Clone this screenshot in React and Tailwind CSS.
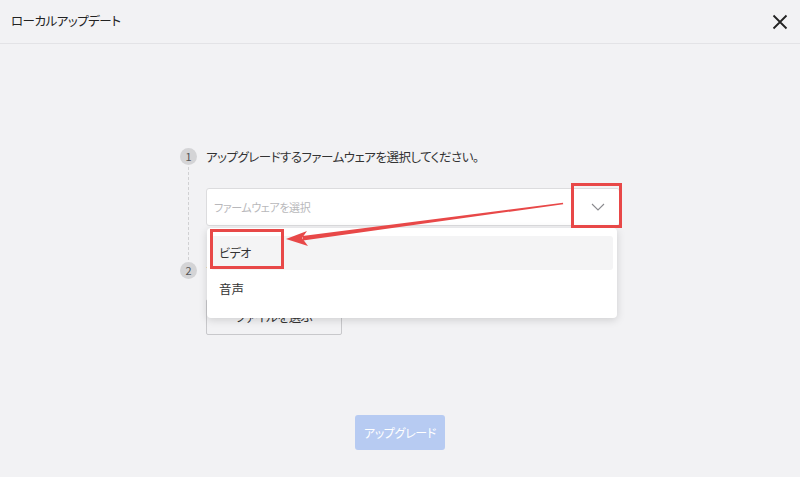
import React from 'react';

const font = { fontFamily: '"Noto Sans CJK JP", "Noto Sans", sans-serif', fontFeatureSettings: '"palt"' };

function StepDot({ n }) {
  return (
    <div className="w-[17px] h-[17px] rounded-full bg-[#d4d4d6] text-[#555] text-[11px] leading-[17px] text-center">
      {n}
    </div>
  );
}

export default function App() {
  return (
    <div className="w-[800px] h-[477px] bg-[#f2f2f4] relative overflow-hidden" style={font}>
      {/* header */}
      <div className="h-[44px] flex items-center justify-between pl-[11px] pr-[12px] border-b border-[#e3e3e6]">
        <span className="text-[12.5px] tracking-[-0.5px] text-[#222]">ローカルアップデート</span>
        <svg width="16" height="16" viewBox="0 0 16 16" className="text-[#222]">
          <path d="M1.5 1.5 L14.5 14.5 M14.5 1.5 L1.5 14.5" stroke="currentColor" strokeWidth="1.8" fill="none" />
        </svg>
      </div>

      {/* steps */}
      <div className="pl-[180px] pt-[104px]">
        <div className="flex gap-[9px]">
          <div className="flex flex-col items-center w-[17px]">
            <StepDot n="1" />
            <div className="flex-1 mt-[2px] mb-[2px] border-l border-dashed border-[#d0d0d2]" />
          </div>
          <div className="pb-[36px]">
            <div className="h-[17px] leading-[17px] text-[12.5px] tracking-[-0.5px] text-[#333]">
              アップグレードするファームウェアを選択してください。
            </div>
            <div className="relative mt-[23px] w-[414px] h-[38px] bg-white border border-[#dcdcde] rounded-[3px] flex items-center justify-between pl-[7px] pr-[14px]">
              <span className="text-[11px] tracking-[-0.4px] text-[#b8b8bb]">ファームウェアを選択</span>
              <svg width="14" height="8" viewBox="0 0 14 8">
                <path d="M1 1 L7 7 L13 1" stroke="#8a8a8e" strokeWidth="1.1" fill="none" />
              </svg>

              {/* dropdown */}
              <div className="absolute left-[0px] top-[39px] w-[410px] bg-white rounded-[4px] shadow-[0_2px_8px_rgba(0,0,0,0.15)] pt-[8px] pb-[12px] px-[4px] z-10 flex flex-col gap-[2px]">
                <div className="h-[34px] rounded-[3px] bg-[#f4f4f5] flex items-center pl-[8px] text-[12px] tracking-[-0.5px] text-[#333]">ビデオ</div>
                <div className="h-[34px] flex items-center pl-[8px] text-[12.5px] text-[#333]">音声</div>
              </div>
            </div>
          </div>
        </div>

        <div className="flex gap-[9px]">
          <div className="w-[17px]">
            <StepDot n="2" />
          </div>
          <div>
            <div className="h-[17px] leading-[17px] text-[12.5px] tracking-[-0.5px] text-[#333]">アップグレードファイルを選択してください。</div>
            <div className="mt-[20px] w-[136px] h-[36px] border border-[#c8c8cb] rounded-[2px] flex items-center justify-center text-[12.5px] tracking-[-0.3px] text-[#333]">
              ファイルを選ぶ
            </div>
          </div>
        </div>
      </div>

      {/* upgrade button */}
      <div className="flex justify-center mt-[80px]">
        <div className="w-[90px] h-[35px] rounded-[3px] bg-[#b7cbf2] text-white text-[12px] tracking-[-0.3px] flex items-center justify-center">
          アップグレード
        </div>
      </div>

      {/* annotations */}
      <div className="absolute left-[571px] top-[183px] w-[51px] h-[45px] border-[3px] border-[#e84848] z-20" />
      <div className="absolute left-[210px] top-[229px] w-[74px] h-[40px] border-[3px] border-[#e84848] z-20" />
      <svg className="absolute left-0 top-0 z-20" width="800" height="477" viewBox="0 0 800 477">
        <path d="M563 202.8 L563.2 204.2 L303 240.5 L302.5 236 Z" fill="#e84848" />
        <path d="M286 239 L307 231 L302 238 L308 246 Z" fill="#e84848" />
      </svg>
    </div>
  );
}
